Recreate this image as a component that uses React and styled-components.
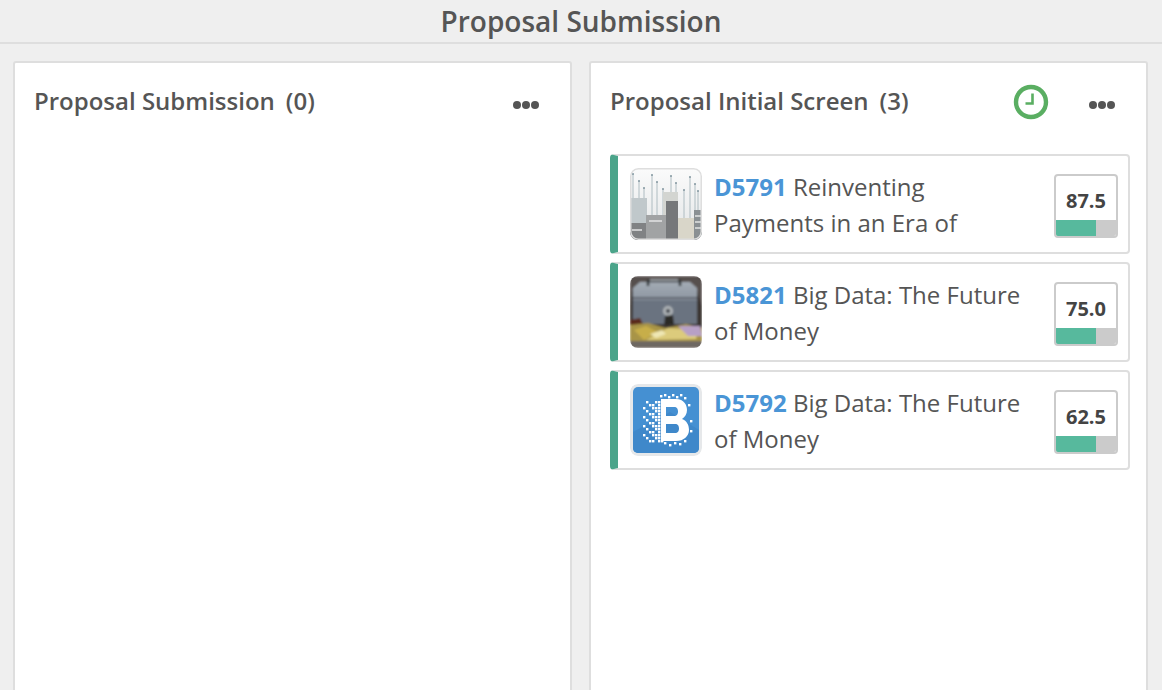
import styled, { createGlobalStyle } from "styled-components";

const GlobalStyle = createGlobalStyle`
  html, body {
    margin: 0;
    height: 100%;
    overflow: hidden;
    background: #efefef;
    font-family: "Open Sans", "Liberation Sans", sans-serif;
    color: #555;
  }
`;

const Page = styled.div`
  width: 1162px;
  height: 690px;
  overflow: hidden;
`;

const Header = styled.header`
  height: 44px;
  box-sizing: border-box;
  border-bottom: 2px solid #dedede;
  display: flex;
  justify-content: center;
  align-items: center;
  font-size: 28px;
  font-weight: 600;
  color: #555;
`;

const Board = styled.main`
  display: flex;
  gap: 17px;
  padding: 17px 0 0 13px;
`;

const Column = styled.section`
  width: 559px;
  height: 660px;
  box-sizing: border-box;
  background: #fff;
  border: 2px solid #dedede;
  border-radius: 3px;
  padding: 0 16px 0 19px;
`;

const ColumnHead = styled.div`
  height: 78px;
  display: flex;
  align-items: center;
`;

const ColumnTitle = styled.h2`
  margin: 0 0 4px;
  font-size: 24px;
  font-weight: 600;
  color: #555;
  flex: 1;
  white-space: nowrap;
`;

const Count = styled.span`
  margin-left: 11px;
`;

const ClockWrap = styled.span`
  display: flex;
  margin-right: 40px;
`;

const Dots = styled.span`
  display: flex;
  gap: 1px;
  margin-top: 6px;
  margin-right: 15px;
`;

const Dot = styled.i`
  width: 8px;
  height: 8px;
  border-radius: 50%;
  background: #555;
`;

const CardList = styled.div`
  display: flex;
  flex-direction: column;
  gap: 8px;
  margin-top: 13px;
`;

const Card = styled.article`
  height: 100px;
  box-sizing: border-box;
  display: flex;
  align-items: center;
  background: #fff;
  border: 2px solid #dedede;
  border-left: 8px solid #4ba48a;
  border-radius: 4px;
  padding-left: 12px;
`;

const Thumb = styled.div`
  width: 72px;
  height: 72px;
  flex: none;
  border-radius: 8px;
  overflow: hidden;
  svg {
    display: block;
  }
`;

const CardText = styled.div`
  width: 312px;
  margin-left: 12px;
  padding-top: 2px;
  font-size: 24px;
  line-height: 36px;
  color: #555;
`;

const Code = styled.span`
  font-weight: 700;
  color: #4a95d6;
`;

const Score = styled.div`
  width: 64px;
  height: 64px;
  box-sizing: border-box;
  margin: 4px 10px 0 auto;
  border: 2px solid #cbcbcb;
  border-radius: 4px;
  display: flex;
  flex-direction: column;
  overflow: hidden;
`;

const ScoreValue = styled.div`
  flex: 1;
  display: flex;
  align-items: center;
  justify-content: center;
  font-size: 20px;
  font-weight: 700;
  color: #444;
  padding-top: 4px;
`;

const ScoreBar = styled.div`
  height: 16px;
  background: #cbcbcb;
`;

const ScoreFill = styled.div`
  height: 100%;
  width: 40px;
  background: #57b99d;
`;

const MoreDots = () => (
  <Dots>
    <Dot />
    <Dot />
    <Dot />
  </Dots>
);

const Clock = () => (
  <svg width="36" height="36" viewBox="0 0 36 36">
    <circle cx="18" cy="18" r="15" fill="none" stroke="#5aae62" strokeWidth="4.4" />
    <path d="M19.5 9.500V19.500H12.500" fill="none" stroke="#5aae62" strokeWidth="2.6" />
  </svg>
);

const antennas = [3, 9, 14, 22, 27, 33, 41, 46, 54, 60, 65, 68];

const CityThumb = () => (
  <svg width="72" height="72" viewBox="0 0 72 72">
    <defs>
      <linearGradient id="sky" x1="0" y1="0" x2="0" y2="1">
        <stop offset="0" stopColor="#fbfbfb" />
        <stop offset="1" stopColor="#e2e5e6" />
      </linearGradient>
      <filter id="soft">
        <feGaussianBlur stdDeviation="0.6" />
      </filter>
    </defs>
    <rect width="72" height="72" fill="url(#sky)" />
    <g filter="url(#soft)">
      <g stroke="#aebcc1" strokeWidth="1">
        {antennas.map((x, i) => (
          <path key={x} d={`M${x} ${6 + ((i * 7) % 20)}V50`} />
        ))}
      </g>
      <g fill="#8397a0">
        {antennas.map((x, i) => (
          <circle key={x} cx={x} cy={6 + ((i * 7) % 20)} r="1" />
        ))}
      </g>
      <rect x="0" y="30" width="17" height="42" fill="#c0c8cb" />
      <rect x="33" y="24" width="15" height="48" fill="#d3d5d1" />
      <rect x="36" y="33" width="12" height="39" fill="#76787a" />
      <rect x="16" y="47" width="20" height="25" fill="#a1a3a4" />
      <rect x="0" y="55" width="16" height="17" fill="#808284" />
      <rect x="48" y="50" width="16" height="22" fill="#d9d6c9" />
      <rect x="64" y="42" width="8" height="30" fill="#8a9093" />
      <path d="M19 53H32M2 62H12M65 48H71M65 54H71M65 60H71" stroke="#e2e4e4" strokeWidth="1.5" />
    </g>
    <rect x="0.75" y="0.75" width="70.5" height="70.5" rx="7.5" fill="none" stroke="#dedede" strokeWidth="1.5" />
  </svg>
);

const CashboxThumb = () => (
  <svg width="72" height="72" viewBox="0 0 72 72">
    <defs>
      <filter id="photo">
        <feGaussianBlur stdDeviation="0.8" />
      </filter>
      <linearGradient id="lid" x1="0" y1="0" x2="0" y2="1">
        <stop offset="0" stopColor="#a3abb4" />
        <stop offset="1" stopColor="#737c89" />
      </linearGradient>
    </defs>
    <g filter="url(#photo)">
      <rect width="72" height="72" fill="#3a3532" />
      <path d="M0 0H72V30L66 12L58 6H10L2 16L0 30Z" fill="#56504e" />
      <path d="M3 12L10 6H60L67 12V46H3Z" fill="url(#lid)" />
      <path d="M3 22H67" stroke="#4c515b" strokeWidth="1.6" />
      <path d="M3 24H67V48H3Z" fill="#6a7380" />
      <path d="M18 10V5H50V10" fill="none" stroke="#2d3035" strokeWidth="2.5" />
      <path d="M20 4H48" stroke="#b4babf" strokeWidth="1.5" />
      <circle cx="38" cy="35" r="5" fill="#aeb3b6" />
      <circle cx="38" cy="35" r="2.2" fill="#4a4e54" />
      <path d="M35 40L43 39L44 48L34 49Z" fill="#2c2a28" />
      <path d="M0 44L10 42L14 50L0 54Z" fill="#5a2c1e" />
      <path d="M0 49L18 47L36 52L56 48L72 52V66H0Z" fill="#a89447" />
      <path d="M16 64L38 52L68 54L66 63Z" fill="#dccb7c" />
      <path d="M4 54L16 50L28 56L14 64Z" fill="#c7ae4a" />
      <path d="M48 50L70 50L72 60L58 60Z" fill="#b7a0c6" />
      <path d="M20 58L32 54L36 58L26 62Z" fill="#efe7b4" />
      <rect x="0" y="65" width="72" height="7" fill="#6e6862" />
    </g>
  </svg>
);

// pixel cloud left of the B, thinning out towards the edge
const cloud = [];
for (let x = 13; x <= 33; x += 3) {
  for (let y = 17; y <= 56; y += 3) {
    const keep = (x * 7 + y * 11) % 9 < (x - 8) / 2.4;
    if (keep) cloud.push([x, y]);
  }
}
const edge = [
  [30, 11], [34, 10], [38, 12], [42, 10], [46, 12], [50, 10], [54, 13],
  [34, 58], [39, 60], [44, 58], [49, 59], [54, 56], [60, 36], [60, 46], [58, 20],
];

const BlockThumb = () => (
  <svg width="72" height="72" viewBox="0 0 72 72">
    <rect width="72" height="72" rx="8" fill="#e6e8ea" />
    <rect x="3" y="3" width="66" height="66" rx="5" fill="#4590d2" />
    <path d="M3 48L40 28L69 46V64a5 5 0 0 1-5 5H8a5 5 0 0 1-5-5Z" fill="#3f88ca" />
    <path
      fillRule="evenodd"
      fill="#fff"
      d="M31 15H46C54 15 57 21 57 26C57 30 55 33 52 35C57 37 59 41 59 46C59 52 54 57 46 57H31ZM36 23V32H44C47 32 48 30 48 27.500C48 25 47 23 44 23ZM36 40V49H45C48 49 49 47 49 44.500C49 42 48 40 45 40Z"
    />
    <g fill="#fff">
      {[...cloud, ...edge].map(([x, y]) => (
        <rect key={`${x}-${y}`} x={x} y={y} width="2.4" height="2.4" />
      ))}
    </g>
  </svg>
);

const cards = [
  { code: "D5791", title: "Reinventing Payments in an Era of", score: "87.5", thumb: <CityThumb /> },
  { code: "D5821", title: "Big Data: The Future of Money", score: "75.0", thumb: <CashboxThumb /> },
  { code: "D5792", title: "Big Data: The Future of Money", score: "62.5", thumb: <BlockThumb /> },
];

export default function App() {
  return (
    <>
      <GlobalStyle />
      <Page>
        <Header>Proposal Submission</Header>
        <Board>
          <Column>
            <ColumnHead>
              <ColumnTitle>
                Proposal Submission<Count>(0)</Count>
              </ColumnTitle>
              <MoreDots />
            </ColumnHead>
          </Column>
          <Column>
            <ColumnHead>
              <ColumnTitle>
                Proposal Initial Screen<Count>(3)</Count>
              </ColumnTitle>
              <ClockWrap>
                <Clock />
              </ClockWrap>
              <MoreDots />
            </ColumnHead>
            <CardList>
              {cards.map((c) => (
                <Card key={c.code}>
                  <Thumb>{c.thumb}</Thumb>
                  <CardText>
                    <Code>{c.code}</Code> {c.title}
                  </CardText>
                  <Score>
                    <ScoreValue>{c.score}</ScoreValue>
                    <ScoreBar>
                      <ScoreFill />
                    </ScoreBar>
                  </Score>
                </Card>
              ))}
            </CardList>
          </Column>
        </Board>
      </Page>
    </>
  );
}
